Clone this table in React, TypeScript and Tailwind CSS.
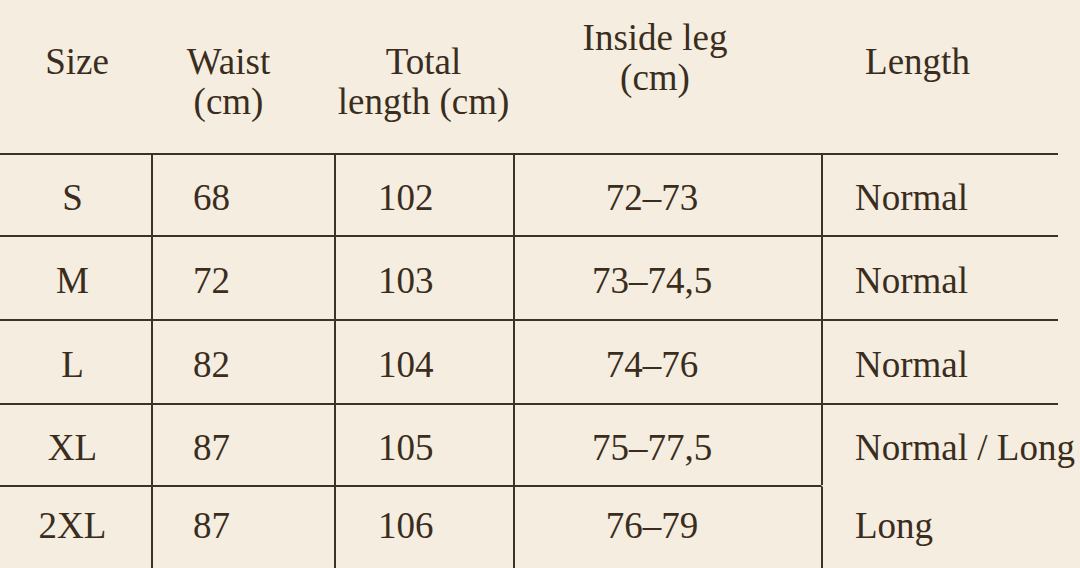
import React from 'react';

const rows = [
  { size: 'S', waist: '68', total: '102', leg: '72–73', len: 'Normal', h: 'h-[82px] pt-[6px]' },
  { size: 'M', waist: '72', total: '103', leg: '73–74,5', len: 'Normal', h: 'h-[84px] pt-[6px]' },
  { size: 'L', waist: '82', total: '104', leg: '74–76', len: 'Normal', h: 'h-[84px] pt-[6px]' },
  { size: 'XL', waist: '87', total: '105', leg: '75–77,5', len: 'Normal / Long', h: 'h-[82px] pt-[6px]' },
  { size: '2XL', waist: '87', total: '106', leg: '76–79', len: 'Long', h: 'h-[83px] pb-[4px]' },
];

export default function App() {
  return (
    <main
      className="w-[1080px] h-[568px] overflow-hidden bg-[#f5eddf] text-[#3a2d20] text-[37px] leading-[40px]"
      style={{ fontFamily: '"Liberation Serif", "Times New Roman", serif' }}
    >
      <div className="w-[1058px]">
        {/* header */}
        <div className="flex h-[153px]">
          <div className="w-[151px] pt-[42px] text-center pl-[3px]">Size</div>
          <div className="w-[183px] pt-[42px] text-center pr-[28px]">
            Waist
            <br />
            (cm)
          </div>
          <div className="w-[179px] pt-[42px] text-center">
            Total
            <br />
            length (cm)
          </div>
          <div className="w-[308px] pt-[18px] text-center pr-[24px]">
            Inside leg
            <br />
            (cm)
          </div>
          <div className="w-[237px] pt-[42px] text-center pr-[44px]">Length</div>
        </div>

        {/* body rows */}
        {rows.map((r, i) => (
          <div key={r.size} className="flex">
            <div className={`w-[151px] flex items-center justify-center pr-[6px] border-t-2 border-[#3d3128] ${r.h}`}>
              {r.size}
            </div>
            <div className={`w-[183px] flex items-center pl-[40px] border-t-2 border-l-2 border-[#3d3128] ${r.h}`}>
              {r.waist}
            </div>
            <div className={`w-[179px] flex items-center pl-[42px] border-t-2 border-l-2 border-[#3d3128] ${r.h}`}>
              {r.total}
            </div>
            <div className={`w-[308px] flex items-center justify-center pr-[32px] border-t-2 border-l-2 border-[#3d3128] ${r.h}`}>
              {r.leg}
            </div>
            <div
              className={`w-[237px] flex items-center pl-[32px] whitespace-nowrap border-t-2 border-l-2 border-[#3d3128] ${r.h} ${
                i === 4 ? 'border-t-transparent' : ''
              }`}
            >
              {r.len}
            </div>
          </div>
        ))}
      </div>
    </main>
  );
}
